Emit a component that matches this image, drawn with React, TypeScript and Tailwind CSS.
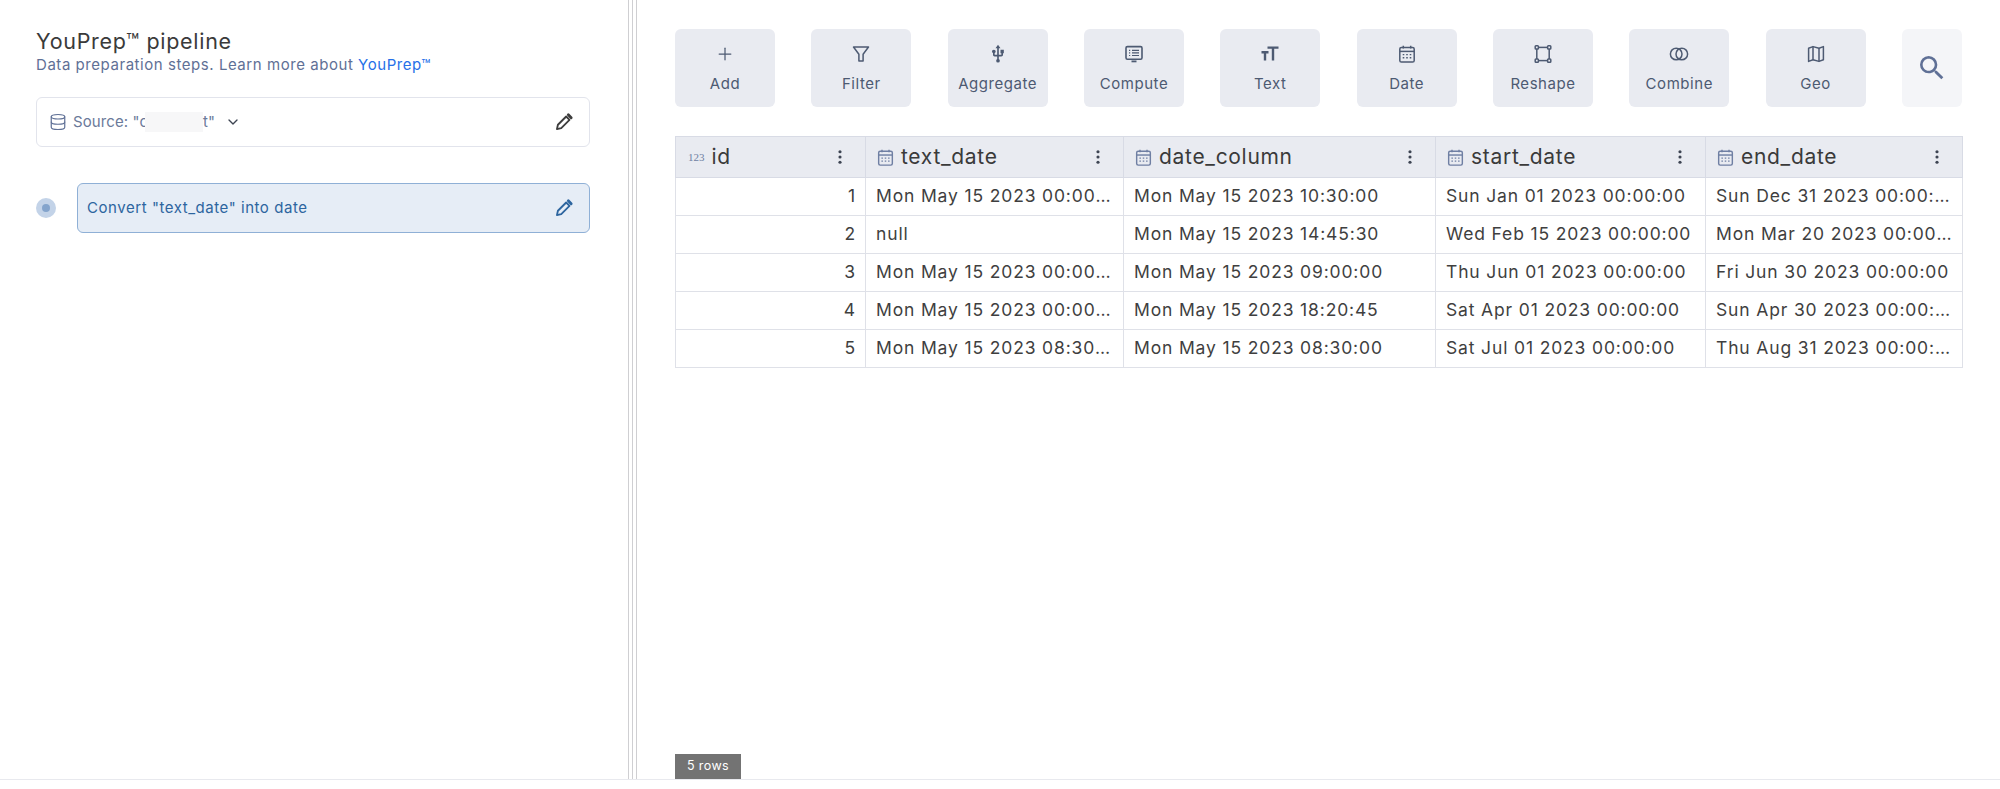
import { Database, ChevronDown, Plus } from 'lucide-react'
import { MdSearch, MdUsb } from 'react-icons/md'

const FONT = "font-['Inter',sans-serif]"

function Pencil({ className }: { className?: string }) {
  return (
    <svg viewBox="0 0 24 24" className={className} fill="none" stroke="currentColor">
      <path d="M3.5 20.5l1.2-5.2L14.6 5.4l4 4-9.9 9.9z" strokeWidth="2.2" strokeLinejoin="round" />
      <path d="M17.2 3.4l3.4 3.4" strokeWidth="3.4" strokeLinecap="round" />
    </svg>
  )
}

function Calendar({ className }: { className?: string }) {
  return (
    <svg viewBox="0 0 20 20" className={className} fill="none" stroke="currentColor">
      <rect x="2.8" y="3.4" width="14.4" height="14.6" rx="1.6" strokeWidth="1.5" />
      <path d="M3 7.4h14" strokeWidth="1.5" />
      <path d="M6.3 1.8v2.6M13.7 1.8v2.6" strokeWidth="1.5" />
      <path d="M5.7 10.6h1.6M9.2 10.6h1.6M12.7 10.6h1.6M5.7 13.8h1.6M9.2 13.8h1.6M12.7 13.8h1.6" strokeWidth="1.4" />
    </svg>
  )
}

function Funnel({ className }: { className?: string }) {
  return (
    <svg viewBox="0 0 20 20" className={className} fill="none" stroke="currentColor" strokeWidth="1.5">
      <path d="M2.5 3h15l-5.4 7.2V17H7.9v-6.8z" strokeLinejoin="round" />
    </svg>
  )
}

function ComputeIcon({ className }: { className?: string }) {
  return (
    <svg viewBox="0 0 20 20" className={className} fill="none" stroke="currentColor">
      <rect x="2" y="2.6" width="16" height="12.6" rx="1.4" strokeWidth="1.6" />
      <path d="M7.5 17.4h5" strokeWidth="1.8" />
      <path d="M8 6.3h7M8 8.9h7M8 11.5h7M5 6.3h1.2M5 8.9h1.2M5 11.5h1.2" strokeWidth="1.2" />
    </svg>
  )
}

function TextIcon({ className }: { className?: string }) {
  return (
    <svg viewBox="0 0 20 20" className={className} fill="none" stroke="currentColor" strokeWidth="2.4">
      <path d="M7.5 3.6h11M13 3.6v13" />
      <path d="M1.5 8.2h7M5 8.2v8.4" />
    </svg>
  )
}

function ReshapeIcon({ className }: { className?: string }) {
  return (
    <svg viewBox="0 0 20 20" className={className} fill="none" stroke="currentColor" strokeWidth="1.5">
      <rect x="3.8" y="3.4" width="12.4" height="13.2" />
      <rect x="2.2" y="1.8" width="3.2" height="3.2" rx="0.8" fill="#e9ebf1" />
      <rect x="14.6" y="1.8" width="3.2" height="3.2" rx="0.8" fill="#e9ebf1" />
      <rect x="2.2" y="15" width="3.2" height="3.2" rx="0.8" fill="#e9ebf1" />
      <rect x="14.6" y="15" width="3.2" height="3.2" rx="0.8" fill="#e9ebf1" />
    </svg>
  )
}

function CombineIcon({ className }: { className?: string }) {
  return (
    <svg viewBox="0 0 20 20" className={className} fill="none" stroke="currentColor" strokeWidth="1.5">
      <circle cx="7.2" cy="10" r="5.8" />
      <circle cx="12.8" cy="10" r="5.8" />
    </svg>
  )
}

function GeoIcon({ className }: { className?: string }) {
  return (
    <svg viewBox="0 0 20 20" className={className} fill="none" stroke="currentColor" strokeWidth="1.5">
      <path d="M2.6 4.2L7 2.6l6 1.6 4.4-1.6v13.2L13 17.4l-6-1.6-4.4 1.6z" strokeLinejoin="round" />
      <path d="M7 2.6v13.2M13 4.2v13.2" />
    </svg>
  )
}

function Dots() {
  return (
    <svg viewBox="0 0 4 16" className="h-[14px] w-[4px] text-[#3d4452]" fill="currentColor">
      <circle cx="2" cy="2" r="1.8" />
      <circle cx="2" cy="8" r="1.8" />
      <circle cx="2" cy="14" r="1.8" />
    </svg>
  )
}

const tools = [
  { label: 'Add', icon: <Plus className="h-5 w-5" strokeWidth={1.5} /> },
  { label: 'Filter', icon: <Funnel className="h-5 w-5" /> },
  { label: 'Aggregate', icon: <MdUsb className="h-5 w-5" /> },
  { label: 'Compute', icon: <ComputeIcon className="h-5 w-5" /> },
  { label: 'Text', icon: <TextIcon className="h-5 w-5" /> },
  { label: 'Date', icon: <Calendar className="h-5 w-5" /> },
  { label: 'Reshape', icon: <ReshapeIcon className="h-5 w-5" /> },
  { label: 'Combine', icon: <CombineIcon className="h-5 w-5" /> },
  { label: 'Geo', icon: <GeoIcon className="h-5 w-5" /> },
]

const columns = [
  { name: 'id', width: 'w-[190px]', numeric: true },
  { name: 'text_date', width: 'w-[258px]' },
  { name: 'date_column', width: 'w-[312px]' },
  { name: 'start_date', width: 'w-[270px]' },
  { name: 'end_date', width: 'w-[257px]' },
]

const rows = [
  ['1', 'Mon May 15 2023 00:00:00', 'Mon May 15 2023 10:30:00', 'Sun Jan 01 2023 00:00:00', 'Sun Dec 31 2023 00:00:00'],
  ['2', 'null', 'Mon May 15 2023 14:45:30', 'Wed Feb 15 2023 00:00:00', 'Mon Mar 20 2023 00:00:00'],
  ['3', 'Mon May 15 2023 00:00:00', 'Mon May 15 2023 09:00:00', 'Thu Jun 01 2023 00:00:00', 'Fri Jun 30 2023 00:00:00'],
  ['4', 'Mon May 15 2023 00:00:00', 'Mon May 15 2023 18:20:45', 'Sat Apr 01 2023 00:00:00', 'Sun Apr 30 2023 00:00:00'],
  ['5', 'Mon May 15 2023 08:30:00', 'Mon May 15 2023 08:30:00', 'Sat Jul 01 2023 00:00:00', 'Thu Aug 31 2023 00:00:00'],
]

export default function App() {
  return (
    <div className={`h-[789px] w-[2000px] overflow-hidden bg-white ${FONT}`}>
      <div className="flex h-[780px] border-b border-[#e8e9ee]">
        {/* pipeline */}
        <aside className="w-[628px] shrink-0 pl-9 pr-[38px] pt-[28px]">
          <h1 className="text-[21.5px] leading-[26px] tracking-[0.7px] text-[#3a3a3a]">YouPrep™ pipeline</h1>
          <p className="mt-[1px] text-[15px] leading-[20px] tracking-[0.55px] text-[#5f7096]">
            Data preparation steps. Learn more about <span className="text-[#2670e8]">YouPrep™</span>
          </p>
          <div className="mt-[22px] flex h-[50px] items-center rounded-md border border-[#e2e4ec] pl-3 pr-[15px]">
            <Database className="h-[18px] w-[18px] text-[#5f7096]" strokeWidth={1.6} />
            <span className="ml-[6px] text-[15px] tracking-[0.1px] text-[#6b7a9a]">Source: "c</span>
            <span className="-ml-[3px] h-5 w-[58px] bg-[#f7f7f8]" />
            <span className="text-[15px] tracking-[0.1px] text-[#6b7a9a]">t"</span>
            <ChevronDown className="ml-[10px] h-4 w-4 text-[#3d4452]" strokeWidth={2} />
            <Pencil className="ml-auto h-5 w-5 text-[#3d3d3d]" />
          </div>
          <div className="mt-[36px] flex items-center">
            <div className="flex h-5 w-5 items-center justify-center rounded-full bg-[#c3d3e8]">
              <span className="h-2 w-2 rounded-full bg-[#84a4cc]" />
            </div>
            <div className="ml-[21px] flex h-[50px] flex-1 items-center justify-between rounded-md border border-[#8fb0d6] bg-[#e6edf6] pl-[9px] pr-[15px]">
              <span className="text-[15px] tracking-[0.55px] text-[#2d659f]">Convert "text_date" into date</span>
              <Pencil className="h-5 w-5 text-[#2d659f]" />
            </div>
          </div>
        </aside>

        {/* splitter */}
        <div className="flex w-[9px] shrink-0 justify-between">
          <span className="w-px bg-[#cfcfd2]" />
          <span className="w-px bg-[#cfcfd2]" />
          <span className="w-px bg-[#cfcfd2]" />
        </div>

        {/* dataset */}
        <main className="flex min-w-0 flex-1 flex-col px-[38px] pt-[29px]">
          <div className="flex justify-between">
            {tools.map((tool) => (
              <button
                key={tool.label}
                type="button"
                className="flex h-[78px] w-[100px] flex-col items-center rounded-md bg-[#e9ebf1] pt-[15px] text-[#4d5a72]"
              >
                {tool.icon}
                <span className="mt-[10px] text-[15px] leading-[20px] tracking-[0.55px]">{tool.label}</span>
              </button>
            ))}
            <button type="button" className="flex h-[78px] w-[60px] items-center justify-center rounded-md bg-[#f4f5f8] text-[#5f7096]">
              <MdSearch className="h-8 w-8" />
            </button>
          </div>

          <table className="mt-[29px] w-[1287px] table-fixed border-collapse">
            <thead>
              <tr className="h-[41px] bg-[#e9ebf1]">
                {columns.map((col) => (
                  <th key={col.name} className={`${col.width} border border-[#d8dbe5] px-[10px] font-normal`}>
                    <div className="flex items-center">
                      {col.numeric ? (
                        <span className="ml-[2px] mr-[7px] font-['Liberation_Serif',serif] text-[11px] text-[#6f7fa3]">123</span>
                      ) : (
                        <Calendar className="mr-[6px] h-[19px] w-[19px] shrink-0 text-[#6f7fa3]" />
                      )}
                      <span className="text-[21px] tracking-[0.7px] text-[#3a3a3a]">{col.name}</span>
                      <span className="ml-auto mr-[13px] flex">
                        <Dots />
                      </span>
                    </div>
                  </th>
                ))}
              </tr>
            </thead>
            <tbody>
              {rows.map((row) => (
                <tr key={row[0]} className="h-[38px]">
                  {row.map((cell, i) => (
                    <td
                      key={i}
                      className={`truncate border border-[#dfe1e8] pl-[10px] pr-[9px] text-[17.5px] tracking-[0.85px] text-[#3f3f3f] ${i === 0 ? 'text-right' : ''}`}
                    >
                      {cell}
                    </td>
                  ))}
                </tr>
              ))}
            </tbody>
          </table>

          <div className="mt-auto flex h-[25px] w-[66px] items-center justify-center bg-[#737373] text-[12.5px] tracking-[0.4px] text-white">
            5 rows
          </div>
        </main>
      </div>
    </div>
  )
}
